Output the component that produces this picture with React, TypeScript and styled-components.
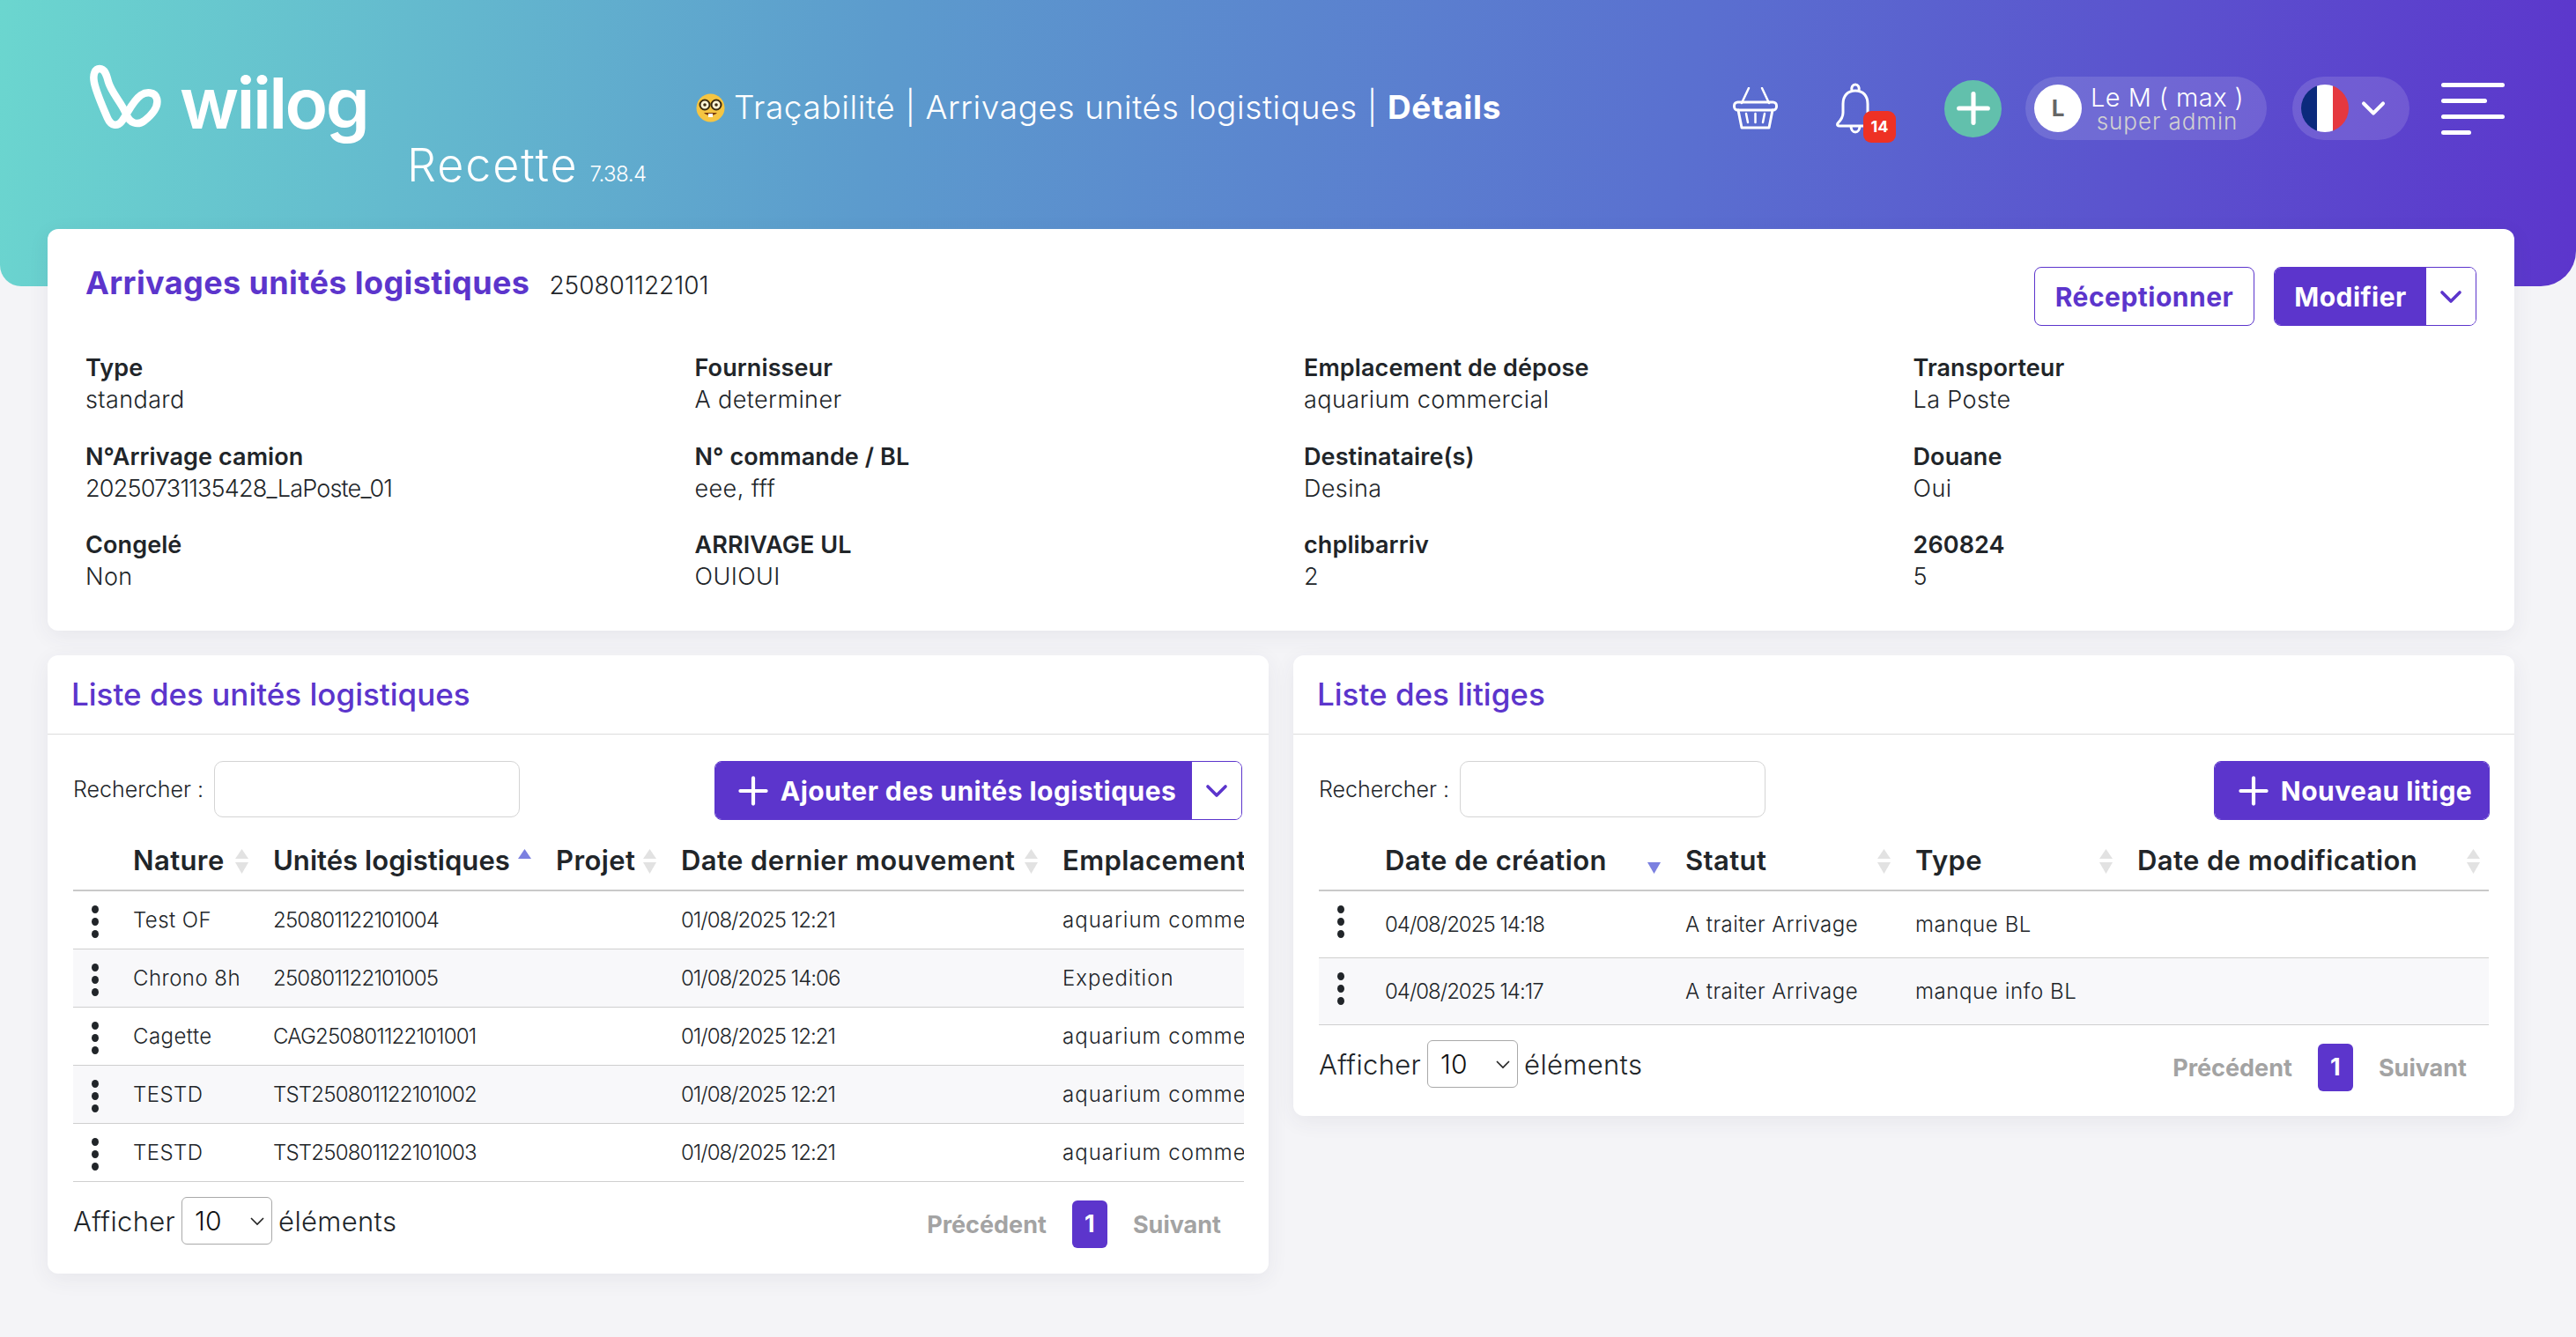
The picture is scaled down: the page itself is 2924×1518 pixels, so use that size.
import React from "react";
import styled, { createGlobalStyle } from "styled-components";
import { ChevronDown, Plus } from "lucide-react";

const PURPLE = "#5c35cc";
const FONT = `Inter, "Open Sans", "Liberation Sans", sans-serif`;
const SELECT_ARROW = `url("data:image/svg+xml,%3Csvg xmlns='http://www.w3.org/2000/svg' width='18' height='11' viewBox='0 0 18 11' fill='none' stroke='%23222' stroke-width='1.6'%3E%3Cpath d='M2 2l7 7 7-7'/%3E%3C/svg%3E")`;

const GlobalStyle = createGlobalStyle`
  html, body {
    margin: 0;
    padding: 0;
    background: #f4f4f7;
    font-family: ${FONT};
    color: #212529;
  }
  * { box-sizing: border-box; }
`;

const Page = styled.div`
  min-height: 1518px;
  background: #f4f4f7;
  overflow: hidden;
`;

const Header = styled.header`
  height: 325px;
  background: linear-gradient(98deg, #6bd6cf 0%, #5c9bcd 34%, #5a70d0 65%, #5c35cc 100%);
  border-radius: 0 0 40px 24px;
  display: flex;
  align-items: flex-start;
  padding: 73px 81px 0 100px;
  color: #fff;
`;

const Brand = styled.div`
  width: 690px;
  flex: none;
`;

const LogoRow = styled.div`
  display: flex;
  align-items: flex-start;
  gap: 20px;
  height: 85px;
`;

const LogoWord = styled.span`
  font-size: 80px;
  font-weight: 600;
  line-height: 80px;
  letter-spacing: -2.6px;
  margin-top: 4px;
`;

const Env = styled.div`
  margin-left: 362px;
  display: flex;
  align-items: baseline;
  gap: 13px;
  font-size: 52px;
  font-weight: 300;
  line-height: 60px;
  letter-spacing: 1.9px;
  white-space: nowrap;
`;

const Version = styled.small`
  font-size: 24px;
  letter-spacing: -0.5px;
`;

const Crumbs = styled.div`
  display: flex;
  align-items: center;
  gap: 10px;
  margin-top: 27px;
  font-size: 37px;
  font-weight: 300;
  line-height: 44px;
  letter-spacing: 0.6px;
  white-space: nowrap;
  b { font-weight: 700; }
`;

const Actions = styled.div`
  margin-left: auto;
  margin-top: 14px;
  display: flex;
  align-items: center;
`;

const IconSlot = styled.div<{ $mr: number }>`
  position: relative;
  display: flex;
  margin-right: ${(p) => p.$mr}px;
`;

const Badge = styled.span`
  position: absolute;
  left: 31px;
  top: 32px;
  width: 37px;
  height: 36px;
  border-radius: 9px;
  background: #ee3124;
  font-size: 18px;
  font-weight: 700;
  line-height: 36px;
  text-align: center;
`;

const AddCircle = styled.div`
  width: 65px;
  height: 65px;
  border-radius: 50%;
  background: #62c0ac;
  display: flex;
  align-items: center;
  justify-content: center;
  margin-right: 27px;
`;

const Pill = styled.div<{ $w: number; $mr: number }>`
  width: ${(p) => p.$w}px;
  height: 72px;
  margin-right: ${(p) => p.$mr}px;
  border-radius: 36px;
  background: rgba(255, 255, 255, 0.13);
  display: flex;
  align-items: center;
  padding-left: 10px;
`;

const Avatar = styled.div`
  width: 54px;
  height: 54px;
  border-radius: 50%;
  background: #fff;
  color: #666;
  font-size: 26px;
  font-weight: 700;
  line-height: 54px;
  text-align: center;
  flex: none;
`;

const UserText = styled.div`
  margin-left: 10px;
  text-align: center;
  width: 174px;
  font-weight: 300;
  white-space: nowrap;
`;

const UserName = styled.div`
  font-size: 29px;
  line-height: 30px;
  letter-spacing: 0.45px;
`;

const UserRole = styled.div`
  font-size: 26px;
  line-height: 24px;
  color: #d2d2d2;
  letter-spacing: 0.95px;
`;

const FlagChevron = styled(ChevronDown)`
  margin-left: 6px;
`;

const Burger = styled.div`
  display: flex;
  flex-direction: column;
  gap: 13px;
`;

const BurgerBar = styled.span<{ $w: number }>`
  display: block;
  width: ${(p) => p.$w}px;
  height: 5px;
  border-radius: 3px;
  background: #fff;
`;

const Main = styled.main`
  margin-top: -65px;
  padding: 0 70px 0 54px;
  display: flex;
  flex-direction: column;
  gap: 28px;
  position: relative;
`;

const Card = styled.section`
  background: #fff;
  border-radius: 12px;
  box-shadow: 0 6px 24px rgba(60, 60, 90, 0.07);
`;

const DetailCard = styled(Card)`
  height: 456px;
  padding: 43px 43px 0;
`;

const DetailTop = styled.div`
  display: flex;
  align-items: flex-start;
  justify-content: space-between;
  height: 97px;
`;

const TitleRow = styled.div`
  display: flex;
  align-items: baseline;
  gap: 22px;
`;

const CardTitle = styled.h1`
  margin: 0;
  color: ${PURPLE};
  font-size: 36px;
  font-weight: 700;
  line-height: 36px;
  letter-spacing: 0.4px;
`;

const Code = styled.span`
  font-size: 28px;
  font-weight: 300;
  letter-spacing: 0;
`;

const ButtonRow = styled.div`
  display: flex;
  gap: 22px;
`;

const OutlineButton = styled.button`
  height: 67px;
  width: 250px;
  background: #fff;
  border: 1.5px solid ${PURPLE};
  border-radius: 8px;
  color: ${PURPLE};
  font-family: ${FONT};
  font-size: 30px;
  font-weight: 700;
  letter-spacing: 0.5px;
  padding: 0;
`;

const SplitButton = styled.div`
  display: flex;
  height: 67px;
  border: 1.5px solid ${PURPLE};
  border-radius: 8px;
  overflow: hidden;
`;

const SplitMain = styled.button<{ $w?: number }>`
  width: ${(p) => p.$w ?? 172}px;
  background: ${PURPLE};
  border: 0;
  color: #fff;
  font-family: ${FONT};
  font-size: 30px;
  font-weight: 700;
  letter-spacing: 0.45px;
  display: flex;
  align-items: center;
  justify-content: center;
  gap: 6px;
  padding: 0;
  white-space: nowrap;
`;

const SplitCaret = styled.button`
  width: 56px;
  background: #fff;
  border: 0;
  color: ${PURPLE};
  display: flex;
  align-items: center;
  justify-content: center;
  padding: 0;
`;

const FieldGrid = styled.dl`
  margin: 0;
  display: grid;
  grid-template-columns: repeat(4, 691.5px);
  grid-auto-rows: 100.5px;
`;

const Field = styled.div`
  white-space: nowrap;
`;

const FieldLabel = styled.dt`
  font-size: 27px;
  font-weight: 600;
  line-height: 36px;
  letter-spacing: 0.1px;
`;

const FieldValue = styled.dd<{ $numeric: boolean }>`
  margin: 0;
  font-size: 27px;
  font-weight: 300;
  line-height: 36px;
  letter-spacing: ${(p) => (p.$numeric ? "-0.8px" : "0.4px")};
`;

const Columns = styled.div`
  display: grid;
  grid-template-columns: 1386px 1386px;
  gap: 28px;
  align-items: start;
`;

const PanelTitle = styled.h2`
  margin: 0;
  height: 90px;
  padding: 0 27px;
  border-bottom: 1px solid #dcdcdc;
  color: ${PURPLE};
  font-size: 35px;
  font-weight: 500;
  line-height: 89px;
`;

const PanelBody = styled.div<{ $bottom: number }>`
  padding: 30px 28px ${(p) => p.$bottom}px 29px;
`;

const Toolbar = styled.div<{ $inset: number }>`
  display: flex;
  align-items: flex-start;
  justify-content: space-between;
  height: 68px;
  padding-right: ${(p) => p.$inset}px;
`;

const SearchLabel = styled.label`
  display: flex;
  align-items: center;
  gap: 12px;
  height: 64px;
  font-size: 25px;
  font-weight: 300;
`;

const SearchInput = styled.input`
  width: 347px;
  height: 64px;
  border: 1.5px solid #d4d4d4;
  border-radius: 10px;
  background: #fff;
  outline: none;
`;

const TableClip = styled.div`
  overflow: hidden;
  margin-top: 10px;
`;

const Table = styled.table<{ $w: number }>`
  table-layout: fixed;
  border-collapse: separate;
  border-spacing: 0;
  width: ${(p) => p.$w}px;
`;

const Th = styled.th<{ $spacing: number }>`
  position: relative;
  height: 70px;
  text-align: left;
  padding: 0;
  font-size: 31px;
  font-weight: 600;
  letter-spacing: ${(p) => p.$spacing}px;
  white-space: nowrap;
  border-bottom: 2px solid #c9c9c9;
`;

const SortMark = styled.svg<{ $right: number }>`
  position: absolute;
  right: ${(p) => p.$right}px;
  top: 22px;
`;

const Row = styled.tr<{ $striped: boolean; $h: number }>`
  height: ${(p) => p.$h}px;
  background: ${(p) => (p.$striped ? "#f8f8fa" : "#fff")};
`;

const Td = styled.td<{ $spacing: number }>`
  padding: 0;
  font-size: 24px;
  font-weight: 300;
  letter-spacing: ${(p) => p.$spacing}px;
  white-space: nowrap;
  overflow: hidden;
  border-bottom: 1px solid #cfcfcf;
`;

const KebabCell = styled.td`
  vertical-align: top;
  padding: 16px 0 0 21px;
  border-bottom: 1px solid #cfcfcf;
`;

const Kebab = styled.div`
  display: flex;
  flex-direction: column;
  gap: 5px;
`;

const Dot = styled.span`
  width: 8px;
  height: 9px;
  border-radius: 50%;
  background: #212529;
`;

const Footer = styled.div`
  display: flex;
  align-items: flex-start;
  justify-content: space-between;
  margin-top: 17px;
`;

const Length = styled.label`
  display: flex;
  align-items: center;
  gap: 7px;
  font-size: 31px;
  font-weight: 300;
  letter-spacing: 0.35px;
`;

const LengthSelect = styled.select`
  appearance: none;
  width: 103px;
  height: 54px;
  padding-left: 14px;
  border: 1.5px solid #a9a9a9;
  border-radius: 6px;
  background: #fff ${SELECT_ARROW} no-repeat right 7px center;
  color: #111;
  font-family: ${FONT};
  font-size: 30px;
  font-weight: 300;
`;

const Pager = styled.div`
  display: flex;
  align-items: center;
  height: 54px;
  margin-top: 4px;
  margin-right: 26px;
  font-size: 27px;
  font-weight: 700;
  color: #a3a3a3;
`;

const PagerCurrent = styled.span`
  width: 40px;
  height: 54px;
  margin: 0 29px;
  border-radius: 6px;
  background: ${PURPLE};
  color: #fff;
  line-height: 54px;
  text-align: center;
`;

const LogoMark = () => (
  <svg width="84" height="76" viewBox="0 0 84 76" fill="none">
    <path
      d="M43 56C47 67 56 70 64 64C74 56 80 47 78 39C76 31 66 31 60 35C50 42 45 56 38 65C33 71 26 70 22 61C16 47 10 34 7 21C5 11 8 5 13 5C19 5 21 12 23 20C27 33 37 42 43 56Z"
      stroke="#fff"
      strokeWidth="8.5"
      strokeLinejoin="round"
    />
  </svg>
);

const NerdFace = () => (
  <svg width="33" height="33" viewBox="0 0 33 33">
    <circle cx="16.5" cy="16.5" r="16" fill="#f5c542" />
    <circle cx="10" cy="13" r="5.5" fill="#fff6d8" stroke="#3a2a10" strokeWidth="2" />
    <circle cx="23" cy="13" r="5.5" fill="#fff6d8" stroke="#3a2a10" strokeWidth="2" />
    <circle cx="10" cy="13" r="1.8" fill="#3a2a10" />
    <circle cx="23" cy="13" r="1.8" fill="#3a2a10" />
    <path d="M9 22C12 26 21 26 24 22Z" fill="#7a3d10" />
    <rect x="14" y="23" width="5" height="4" fill="#fff" />
  </svg>
);

const BasketIcon = () => (
  <svg width="51" height="48" viewBox="0 0 51 48" fill="none" stroke="#fff" strokeLinecap="round" strokeLinejoin="round">
    <path d="M10 18L18 1M41 18L33 1" strokeWidth="2.5" />
    <rect x="1.5" y="17" width="48" height="9" rx="4" strokeWidth="3" />
    <path d="M6 26L10 46H41L45 26" strokeWidth="3" />
    <path d="M15 30L17 40M25.5 30V40M36 30L34 40" strokeWidth="2.5" />
  </svg>
);

const BellIcon = () => (
  <svg width="44" height="58" viewBox="0 0 44 58" fill="none" stroke="#fff" strokeWidth="3" strokeLinejoin="round">
    <path d="M22 9C13 9 8 15 8 24V34C8 39 6 42 2 46C1 48 2 49 4 49H40C42 49 43 48 42 46C38 42 36 39 36 34V24C36 15 31 9 22 9Z" />
    <path d="M18 9C17 5 19 2 22 2C25 2 27 5 26 9" />
    <path d="M17 49C17 53 19 56 22 56C25 56 27 53 27 49" />
  </svg>
);

const FlagRound = () => (
  <svg width="54" height="54" viewBox="0 0 54 54">
    <clipPath id="flag-clip">
      <circle cx="27" cy="27" r="27" />
    </clipPath>
    <g clipPath="url(#flag-clip)">
      <rect width="18" height="54" fill="#0b2a7c" />
      <rect x="18" width="18" height="54" fill="#fff" />
      <rect x="36" width="18" height="54" fill="#e5383f" />
    </g>
  </svg>
);

type SortState = "none" | "asc" | "desc";

const SortIcon = ({ state, right }: { state: SortState; right: number }) => (
  <SortMark $right={right} width="15" height="28" viewBox="0 0 15 28">
    {state !== "desc" && <path d="M7.5 0L15 11H0Z" fill={state === "asc" ? "#7b80e0" : "#e2e2e2"} />}
    {state !== "asc" && <path d="M7.5 28L15 15H0Z" fill={state === "desc" ? "#7b80e0" : "#e2e2e2"} />}
  </SortMark>
);

const KebabMenu = () => (
  <Kebab>
    <Dot />
    <Dot />
    <Dot />
  </Kebab>
);

type Column = {
  label: string;
  width: number;
  sort: SortState;
  right?: number;
  spacing?: number;
  labelSpacing?: number;
};

const DataTable = ({
  columns,
  rows,
  rowHeight,
}: {
  columns: Column[];
  rows: string[][];
  rowHeight: number;
}) => (
  <TableClip>
    <Table $w={columns.reduce((sum, c) => sum + c.width, 0)}>
      <colgroup>
        {columns.map((c, i) => (
          <col key={i} width={c.width} />
        ))}
      </colgroup>
      <thead>
        <tr>
          {columns.map((c, i) => (
            <Th key={i} $spacing={c.labelSpacing ?? 0.4}>
              {c.label}
              {c.label && <SortIcon state={c.sort} right={c.right ?? 28} />}
            </Th>
          ))}
        </tr>
      </thead>
      <tbody>
        {rows.map((row, r) => (
          <Row key={r} $striped={r % 2 === 1} $h={rowHeight}>
            <KebabCell>
              <KebabMenu />
            </KebabCell>
            {row.map((cell, c) => (
              <Td key={c} $spacing={columns[c + 1].spacing ?? 0.45}>
                {cell}
              </Td>
            ))}
          </Row>
        ))}
      </tbody>
    </Table>
  </TableClip>
);

const TableFooter = () => (
  <Footer>
    <Length>
      Afficher
      <LengthSelect defaultValue="10">
        <option value="10">10</option>
      </LengthSelect>
      éléments
    </Length>
    <Pager>
      Précédent
      <PagerCurrent>1</PagerCurrent>
      Suivant
    </Pager>
  </Footer>
);

const FIELDS = [
  ["Type", "standard"],
  ["Fournisseur", "A determiner"],
  ["Emplacement de dépose", "aquarium commercial"],
  ["Transporteur", "La Poste"],
  ["N°Arrivage camion", "20250731135428_LaPoste_01"],
  ["N° commande / BL", "eee, fff"],
  ["Destinataire(s)", "Desina"],
  ["Douane", "Oui"],
  ["Congelé", "Non"],
  ["ARRIVAGE UL", "OUIOUI"],
  ["chplibarriv", "2"],
  ["260824", "5"],
];

const UL_COLUMNS: Column[] = [
  { label: "", width: 68, sort: "none" },
  { label: "Nature", width: 159, sort: "none" },
  { label: "Unités logistiques", width: 321, sort: "asc", spacing: -0.8, labelSpacing: 0.05 },
  { label: "Projet", width: 142, sort: "none" },
  { label: "Date dernier mouvement", width: 433, sort: "none", spacing: -1 },
  { label: "Emplacement", width: 400, sort: "none", spacing: 1 },
];

const UL_ROWS = [
  ["Test OF", "250801122101004", "", "01/08/2025 12:21", "aquarium commercial"],
  ["Chrono 8h", "250801122101005", "", "01/08/2025 14:06", "Expedition"],
  ["Cagette", "CAG250801122101001", "", "01/08/2025 12:21", "aquarium commercial"],
  ["TESTD", "TST250801122101002", "", "01/08/2025 12:21", "aquarium commercial"],
  ["TESTD", "TST250801122101003", "", "01/08/2025 12:21", "aquarium commercial"],
];

const LITIGE_COLUMNS: Column[] = [
  { label: "", width: 75, sort: "none" },
  { label: "Date de création", width: 341, sort: "desc", spacing: -1 },
  { label: "Statut", width: 261, sort: "none" },
  { label: "Type", width: 252, sort: "none", spacing: 0.6 },
  { label: "Date de modification", width: 399, sort: "none", right: 10 },
];

const LITIGE_ROWS = [
  ["04/08/2025 14:18", "A traiter Arrivage", "manque BL", ""],
  ["04/08/2025 14:17", "A traiter Arrivage", "manque info BL", ""],
];

export default function App() {
  return (
    <Page>
      <GlobalStyle />
      <Header>
        <Brand>
          <LogoRow>
            <LogoMark />
            <LogoWord>wiilog</LogoWord>
          </LogoRow>
          <Env>
            Recette <Version>7.38.4</Version>
          </Env>
        </Brand>
        <Crumbs>
          <NerdFace />
          <span>
            Traçabilité | Arrivages unités logistiques | <b>Détails</b>
          </span>
        </Crumbs>
        <Actions>
          <IconSlot $mr={66}>
            <BasketIcon />
          </IconSlot>
          <IconSlot $mr={79}>
            <BellIcon />
            <Badge>14</Badge>
          </IconSlot>
          <AddCircle>
            <Plus color="#fff" size={56} strokeWidth={2.2} />
          </AddCircle>
          <Pill $w={274} $mr={29}>
            <Avatar>L</Avatar>
            <UserText>
              <UserName>Le M ( max )</UserName>
              <UserRole>super admin</UserRole>
            </UserText>
          </Pill>
          <Pill $w={133} $mr={36}>
            <FlagRound />
            <FlagChevron color="#fff" size={44} strokeWidth={2.2} />
          </Pill>
          <Burger>
            <BurgerBar $w={72} />
            <BurgerBar $w={52} />
            <BurgerBar $w={72} />
            <BurgerBar $w={34} />
          </Burger>
        </Actions>
      </Header>
      <Main>
        <DetailCard>
          <DetailTop>
            <TitleRow>
              <CardTitle>Arrivages unités logistiques</CardTitle>
              <Code>250801122101</Code>
            </TitleRow>
            <ButtonRow>
              <OutlineButton>Réceptionner</OutlineButton>
              <SplitButton>
                <SplitMain>Modifier</SplitMain>
                <SplitCaret>
                  <ChevronDown size={40} strokeWidth={2.2} />
                </SplitCaret>
              </SplitButton>
            </ButtonRow>
          </DetailTop>
          <FieldGrid>
            {FIELDS.map(([label, value]) => (
              <Field key={label}>
                <FieldLabel>{label}</FieldLabel>
                <FieldValue $numeric={/^\d{4,}/.test(value)}>{value}</FieldValue>
              </Field>
            ))}
          </FieldGrid>
        </DetailCard>
        <Columns>
          <Card>
            <PanelTitle>Liste des unités logistiques</PanelTitle>
            <PanelBody $bottom={29}>
              <Toolbar $inset={2}>
                <SearchLabel>
                  Rechercher :
                  <SearchInput />
                </SearchLabel>
                <SplitButton>
                  <SplitMain $w={541}>
                    <Plus size={50} strokeWidth={2} />
                    Ajouter des unités logistiques
                  </SplitMain>
                  <SplitCaret>
                    <ChevronDown size={40} strokeWidth={2.2} />
                  </SplitCaret>
                </SplitButton>
              </Toolbar>
              <DataTable columns={UL_COLUMNS} rows={UL_ROWS} rowHeight={66} />
              <TableFooter />
            </PanelBody>
          </Card>
          <Card>
            <PanelTitle>Liste des litiges</PanelTitle>
            <PanelBody $bottom={28}>
              <Toolbar $inset={0}>
                <SearchLabel>
                  Rechercher :
                  <SearchInput />
                </SearchLabel>
                <SplitButton>
                  <SplitMain $w={311}>
                    <Plus size={50} strokeWidth={2} />
                    Nouveau litige
                  </SplitMain>
                </SplitButton>
              </Toolbar>
              <DataTable columns={LITIGE_COLUMNS} rows={LITIGE_ROWS} rowHeight={76} />
              <TableFooter />
            </PanelBody>
          </Card>
        </Columns>
      </Main>
    </Page>
  );
}
